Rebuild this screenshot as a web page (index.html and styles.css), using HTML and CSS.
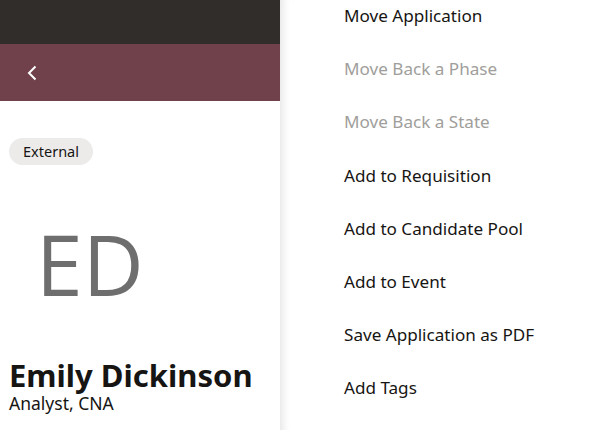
FILE: index.html
```html
<!DOCTYPE html>
<html>
<head>
<meta charset="utf-8">
<link rel="stylesheet" href="styles.css">
</head>
<body>
<div class="page">
  <div class="left">
    <div class="topbar"></div>
    <div class="navbar">
      <svg class="back" width="12" height="16" viewBox="0 0 12 16"><path d="M9.5 1.5 L3 8 L9.5 14.5" fill="none" stroke="#fff" stroke-width="2"/></svg>
    </div>
    <div class="content">
      <span class="chip">External</span>
      <div class="initials">ED</div>
      <div class="name">Emily Dickinson</div>
      <div class="title">Analyst, CNA</div>
    </div>
  </div>
  <div class="menu">
    <div class="item">Move Application</div>
    <div class="item disabled">Move Back a Phase</div>
    <div class="item disabled">Move Back a State</div>
    <div class="item">Add to Requisition</div>
    <div class="item">Add to Candidate Pool</div>
    <div class="item">Add to Event</div>
    <div class="item">Save Application as PDF</div>
    <div class="item">Add Tags</div>
  </div>
</div>
</body>
</html>
```
FILE: styles.css
```css
* { box-sizing: border-box; }
html, body { margin: 0; padding: 0; }
body {
  width: 598px;
  height: 430px;
  overflow: hidden;
  font-family: "Noto Sans", "Open Sans", sans-serif;
  color: #161513;
  background: #fff;
}
.page {
  display: flex;
  height: 430px;
}
.left {
  width: 280px;
  flex: none;
  display: flex;
  flex-direction: column;
}
.topbar {
  height: 44px;
  background: #312d2a;
}
.navbar {
  height: 57px;
  background: #70414a;
  display: flex;
  align-items: center;
  padding-left: 26px;
}
.back { display: block; }
.content {
  padding: 37px 10px 0 9px;
}
.chip {
  display: inline-block;
  height: 27px;
  line-height: 27px;
  padding: 0 14px;
  border-radius: 14px;
  background: #ecebea;
  font-size: 14.5px;
}
.initials {
  margin: 49px 0 0 27px;
  font-family: "Open Sans", sans-serif;
  font-size: 84px;
  line-height: 100px;
  color: #6e6e6e;
}
.name {
  margin-top: 44px;
  font-size: 31px;
  font-weight: 700;
  line-height: 34px;
}
.title {
  font-size: 17.5px;
  line-height: 22px;
}
.menu {
  flex: 1;
  background: #fff;
  box-shadow: inset 10px 0 10px -8px rgba(0,0,0,0.12);
  padding-left: 64px;
}
.item {
  height: 53.2px;
  line-height: 32px;
  font-size: 17.1px;
  white-space: nowrap;
}
.item.disabled { color: #a09e9b; }
```
